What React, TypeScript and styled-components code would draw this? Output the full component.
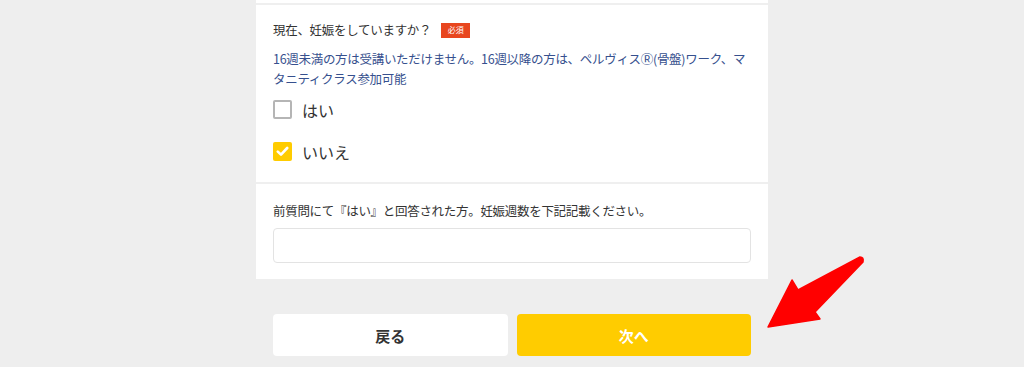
import React from 'react'
import styled, { createGlobalStyle } from 'styled-components'

const GlobalStyle = createGlobalStyle`
  html, body {
    margin: 0;
    padding: 0;
    background: #eeeeee;
    font-family: 'Noto Sans CJK JP', 'Noto Sans', sans-serif;
    color: #333333;
  }
`

const Page = styled.div`
  position: relative;
  width: 1024px;
  height: 367px;
  overflow: hidden;
  background: #eeeeee;
`

const Column = styled.div`
  width: 512px;
  margin: 0 auto;
`

const Card = styled.div`
  background: #ffffff;
`

const Section = styled.div<{ $top?: number; $bottom?: number }>`
  padding: ${(p) => p.$top ?? 17}px 17px ${(p) => p.$bottom ?? 17}px;
  border-top: 2px solid #efefef;
`

const PrevEnd = styled.div`
  height: 3px;
`

const QuestionRow = styled.div`
  display: flex;
  align-items: center;
  height: 20px;
  font-size: 12.5px;
  line-height: 20px;
  letter-spacing: -0.3px;
  color: #333333;
`

const Badge = styled.span`
  display: inline-flex;
  align-items: center;
  justify-content: center;
  margin-left: 10px;
  width: 29px;
  height: 15px;
  background: #e8461f;
  color: #ffffff;
  font-size: 8px;
  letter-spacing: 0;
  line-height: 1;
`

const Note = styled.p`
  margin: 9px 0 0;
  font-size: 12.5px;
  line-height: 20px;
  letter-spacing: -0.3px;
  color: #36508e;
`

const Options = styled.div`
  display: flex;
  flex-direction: column;
  gap: 23px;
  margin-top: 11px;
`

const Option = styled.label`
  display: flex;
  align-items: center;
  height: 19px;
  font-size: 16px;
  color: #333333;
  cursor: pointer;
`

const Box = styled.span<{ $checked?: boolean }>`
  display: inline-flex;
  align-items: center;
  justify-content: center;
  box-sizing: border-box;
  width: 19px;
  height: 19px;
  margin-right: 10px;
  border-radius: 2px;
  border: ${(p) => (p.$checked ? 'none' : '2px solid #b5b5b5')};
  background: ${(p) => (p.$checked ? '#ffcc00' : '#ffffff')};
`

const Label = styled.div`
  font-size: 12.5px;
  line-height: 20px;
  letter-spacing: -0.3px;
  color: #333333;
`

const Input = styled.input`
  display: block;
  box-sizing: border-box;
  width: 100%;
  height: 35px;
  margin-top: 7px;
  border: 1px solid #e3e3e3;
  border-radius: 4px;
  background: #ffffff;
  outline: none;
`

const Actions = styled.div`
  display: flex;
  gap: 9px;
  padding: 35px 17px 0;
`

const Button = styled.button<{ $primary?: boolean }>`
  flex: 1;
  height: 42px;
  border: none;
  border-radius: 4px;
  background: ${(p) => (p.$primary ? '#ffcc00' : '#ffffff')};
  color: ${(p) => (p.$primary ? '#ffffff' : '#333333')};
  font-family: inherit;
  font-size: 15px;
  font-weight: 700;
  cursor: pointer;
`

const Arrow = styled.svg`
  position: absolute;
  left: 760px;
  top: 250px;
`

const Check = () => (
  <svg width='13' height='11' viewBox='0 0 13 11'>
    <path
      d='M1.8 5.6 L5 8.6 L11.2 2'
      fill='none'
      stroke='#ffffff'
      strokeWidth='2.6'
      strokeLinecap='round'
      strokeLinejoin='round'
    />
  </svg>
)

export default function App() {
  return (
    <Page>
      <GlobalStyle />
      <Column>
        <Card>
          <PrevEnd />
          <Section $top={15} $bottom={21}>
            <QuestionRow>
              現在、妊娠をしていますか？
              <Badge>必須</Badge>
            </QuestionRow>
            <Note>
              16週未満の方は受講いただけません。16週以降の方は、ペルヴィスⓇ(骨盤)ワーク、マタニティクラス参加可能
            </Note>
            <Options>
              <Option>
                <Box />
                はい
              </Option>
              <Option>
                <Box $checked>
                  <Check />
                </Box>
                いいえ
              </Option>
            </Options>
          </Section>
          <Section $top={17} $bottom={16}>
            <Label>前質問にて『はい』と回答された方。妊娠週数を下記記載ください。</Label>
            <Input type='text' />
          </Section>
        </Card>
        <Actions>
          <Button>戻る</Button>
          <Button $primary>次へ</Button>
        </Actions>
      </Column>
      <Arrow width='110' height='85' viewBox='760 250 110 85'>
        <path
          d='M768 327 L792 280 L798 290 L860 257 Q864 257 863 262 L815 312 L820 319 Z'
          fill='#ff0000'
          stroke='#ff0000'
          strokeWidth='1.5'
          strokeLinejoin='round'
        />
      </Arrow>
    </Page>
  )
}
